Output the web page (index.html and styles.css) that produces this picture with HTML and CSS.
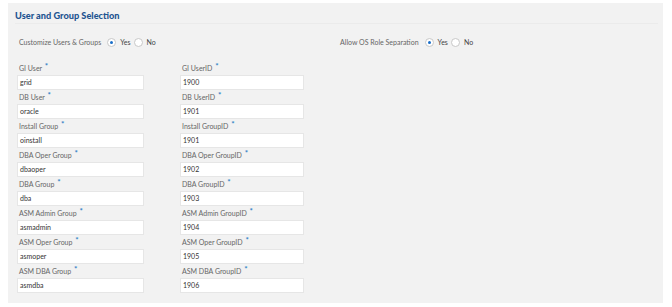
FILE: index.html
```html
<!DOCTYPE html>
<html>
<head>
<meta charset="utf-8">
<link rel="stylesheet" href="styles.css">
</head>
<body>
<div class="panel">
  <div class="title">User and Group Selection</div>
  <div class="options">
    <div class="opt">
      <span class="opt-label">Customize Users &amp; Groups</span>
      <span class="radio checked"></span><span class="rtext">Yes</span>
      <span class="radio"></span><span class="rtext">No</span>
    </div>
    <div class="opt">
      <span class="opt-label">Allow OS Role Separation</span>
      <span class="radio checked"></span><span class="rtext">Yes</span>
      <span class="radio"></span><span class="rtext">No</span>
    </div>
  </div>
  <div class="fields">
    <div class="field"><div class="label">GI User <span class="req">*</span></div><div class="input">grid</div></div>
    <div class="field"><div class="label">GI UserID <span class="req">*</span></div><div class="input">1900</div></div>
    <div class="field"><div class="label">DB User <span class="req">*</span></div><div class="input">oracle</div></div>
    <div class="field"><div class="label">DB UserID <span class="req">*</span></div><div class="input">1901</div></div>
    <div class="field"><div class="label">Install Group <span class="req">*</span></div><div class="input">oinstall</div></div>
    <div class="field"><div class="label">Install GroupID <span class="req">*</span></div><div class="input">1901</div></div>
    <div class="field"><div class="label">DBA Oper Group <span class="req">*</span></div><div class="input">dbaoper</div></div>
    <div class="field"><div class="label">DBA Oper GroupID <span class="req">*</span></div><div class="input">1902</div></div>
    <div class="field"><div class="label">DBA Group <span class="req">*</span></div><div class="input">dba</div></div>
    <div class="field"><div class="label">DBA GroupID <span class="req">*</span></div><div class="input">1903</div></div>
    <div class="field"><div class="label">ASM Admin Group <span class="req">*</span></div><div class="input">asmadmin</div></div>
    <div class="field"><div class="label">ASM Admin GroupID <span class="req">*</span></div><div class="input">1904</div></div>
    <div class="field"><div class="label">ASM Oper Group <span class="req">*</span></div><div class="input">asmoper</div></div>
    <div class="field"><div class="label">ASM Oper GroupID <span class="req">*</span></div><div class="input">1905</div></div>
    <div class="field"><div class="label">ASM DBA Group <span class="req">*</span></div><div class="input">asmdba</div></div>
    <div class="field"><div class="label">ASM DBA GroupID <span class="req">*</span></div><div class="input">1906</div></div>
  </div>
</div>
</body>
</html>
```
FILE: styles.css
```css
html, body {
  margin: 0;
  padding: 0;
  background: #ffffff;
}
body {
  font-family: Lato, "Open Sans", sans-serif;
  color: #555;
}
.panel {
  margin: 3px 9px 4px 8px;
  height: 300px;
  background: #f2f2f2;
  box-sizing: border-box;
  padding: 0 5px 0 7px;
}
.title {
  padding-top: 6px;
  line-height: 14px;
  height: 14px;
  font-size: 9.2px;
  font-weight: 900;
  color: #1f5591;
  border-bottom: 1px solid #ebebeb;
}
.options {
  display: grid;
  grid-template-columns: 321px 1fr;
  margin-top: 12px;
  padding-left: 4px;
}
.opt {
  display: flex;
  align-items: center;
  height: 12px;
  font-size: 7px;
}
.opt-label {
  color: #666;
  margin-right: 6px;
}
.radio {
  width: 7px;
  height: 7px;
  border: 1px solid #c8c8c8;
  border-radius: 50%;
  background: #fff;
  box-sizing: content-box;
  position: relative;
  margin-right: 4px;
}
.radio.checked::after {
  content: "";
  position: absolute;
  left: 2px;
  top: 2px;
  width: 3px;
  height: 3px;
  border-radius: 50%;
  background: #1a6ec8;
}
.rtext {
  color: #444;
  margin-right: 3px;
}
.fields {
  display: grid;
  grid-template-columns: 127px 124px;
  column-gap: 36px;
  margin-top: 13px;
  padding-left: 2px;
}
.field {
  display: flex;
  flex-direction: column;
}
.label {
  height: 14px;
  line-height: 14px;
  font-size: 7px;
  color: #666;
  padding-left: 2px;
}
.req {
  color: #2f7fc6;
  font-size: 8px;
  font-weight: bold;
  position: relative;
  top: -2px;
  margin-left: 1px;
}
.input {
  height: 15px;
  box-sizing: border-box;
  background: #fff;
  border: 1px solid #e6e6e6;
  font-size: 7px;
  color: #333;
  padding-left: 2px;
  line-height: 13px;
}
```
